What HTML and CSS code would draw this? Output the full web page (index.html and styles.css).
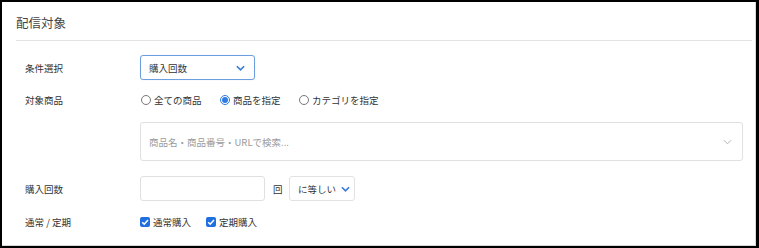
FILE: index.html
```html
<!DOCTYPE html>
<html lang="ja">
<head>
<meta charset="utf-8">
<link rel="stylesheet" href="styles.css">
</head>
<body>
<div class="panel">
  <div class="title">配信対象</div>
  <div class="form">
    <div class="row r1">
      <div class="label">条件選択</div>
      <div class="select sel-main">
        <span>購入回数</span>
        <svg class="chev" viewBox="0 0 10 6" width="9" height="6"><path d="M1 1 L5 5 L9 1" fill="none" stroke="#3a7bd5" stroke-width="1.8"/></svg>
      </div>
    </div>
    <div class="row r2">
      <div class="label">対象商品</div>
      <div class="opts">
        <label class="opt o1"><span class="radio"></span>全ての商品</label>
        <label class="opt o2"><span class="radio on"></span>商品を指定</label>
        <label class="opt"><span class="radio"></span>カテゴリを指定</label>
      </div>
    </div>
    <div class="row r3">
      <div class="label"></div>
      <div class="search">
        <span class="ph">商品名・商品番号・URLで検索...</span>
        <svg class="chev" viewBox="0 0 10 6" width="9" height="6"><path d="M1 1 L5 5 L9 1" fill="none" stroke="#aaa" stroke-width="1"/></svg>
      </div>
    </div>
    <div class="row r4">
      <div class="label">購入回数</div>
      <div class="inp"></div>
      <span class="unit">回</span>
      <div class="select sel-eq">
        <span>に等しい</span>
        <svg class="chev" viewBox="0 0 10 6" width="9" height="6"><path d="M1 1 L5 5 L9 1" fill="none" stroke="#3a7bd5" stroke-width="1.8"/></svg>
      </div>
    </div>
    <div class="row r5">
      <div class="label">通常 / 定期</div>
      <label class="opt c1"><span class="check"><svg viewBox="0 0 10 10" width="10" height="10"><path d="M2.2 5.2 L4.2 7.2 L8 3" fill="none" stroke="#fff" stroke-width="1.6"/></svg></span>通常購入</label>
      <label class="opt"><span class="check"><svg viewBox="0 0 10 10" width="10" height="10"><path d="M2.2 5.2 L4.2 7.2 L8 3" fill="none" stroke="#fff" stroke-width="1.6"/></svg></span>定期購入</label>
    </div>
  </div>
</div>
</body>
</html>
```
FILE: styles.css
```css
* { box-sizing: border-box; }
html, body { height: 100%; }
body {
  margin: 0;
  background: #000;
  padding: 2px 3px 2px 2px;
  font-family: "Noto Sans CJK JP", "Noto Sans", sans-serif;
  color: #333;
}
.panel {
  background: #fff;
  height: 100%;
  border-right: 1px solid #d8d8d8;
  border-bottom: 1px solid #d8d8d8;
  padding: 0 3px 0 14px;
}
.title {
  height: 39px;
  line-height: 39px;
  font-size: 12.5px;
  color: #444;
  border-bottom: 1px solid #e3e3e3;
  padding-top: 1px;
}
.form {
  padding-left: 9px;
  padding-right: 9px;
  font-size: 9.5px;
}
.row { display: flex; align-items: center; }
.label { width: 115px; flex: none; color: #333; }
.r1 { margin-top: 14px; height: 25px; }
.r2 { margin-top: 8px; height: 24px; }
.r3 { margin-top: 10px; height: 39px; }
.r4 { margin-top: 15px; height: 25px; }
.r5 { margin-top: 13px; height: 16px; }

.select {
  height: 25px;
  border-radius: 3px;
  display: flex;
  align-items: center;
  justify-content: space-between;
  padding: 0 9px 0 8px;
  color: #333;
}
.sel-main { width: 115px; border: 1px solid #6b9fe0; box-shadow: 0 0 1px rgba(80,140,220,0.4); }
.sel-eq { width: 66px; border: 1px solid #e2e2e2; margin-left: 6px; padding-right: 4px; }
.opts { display: flex; align-items: center; }
.opt { display: flex; align-items: center; white-space: nowrap; }
.o1 { width: 79px; margin-left: 1px; }
.o2 { width: 79px; }
.radio {
  width: 10px; height: 10px; border-radius: 50%;
  border: 1px solid #777; margin-right: 3px; flex: none;
  display: inline-flex; align-items: center; justify-content: center;
}
.radio.on { border-color: #2f7ae5; }
.radio.on::after { content: ""; width: 6px; height: 6px; border-radius: 50%; background: #2f7ae5; }
.search {
  flex: 1;
  height: 39px;
  border: 1px solid #e0e0e0;
  border-radius: 3px;
  display: flex;
  align-items: center;
  justify-content: space-between;
  padding: 0 10px 0 8px;
}
.ph { color: #9a9a9a; }
.inp { width: 125px; height: 25px; border: 1px solid #e0e0e0; border-radius: 3px; }
.unit { margin-left: 8px; width: 10px; }
.check {
  width: 10px; height: 10px; background: #1f6fe0; border-radius: 2px;
  margin-right: 3px; flex: none; display: inline-flex;
}
.check svg { display: block; }
.c1 { width: 66px; }
```
